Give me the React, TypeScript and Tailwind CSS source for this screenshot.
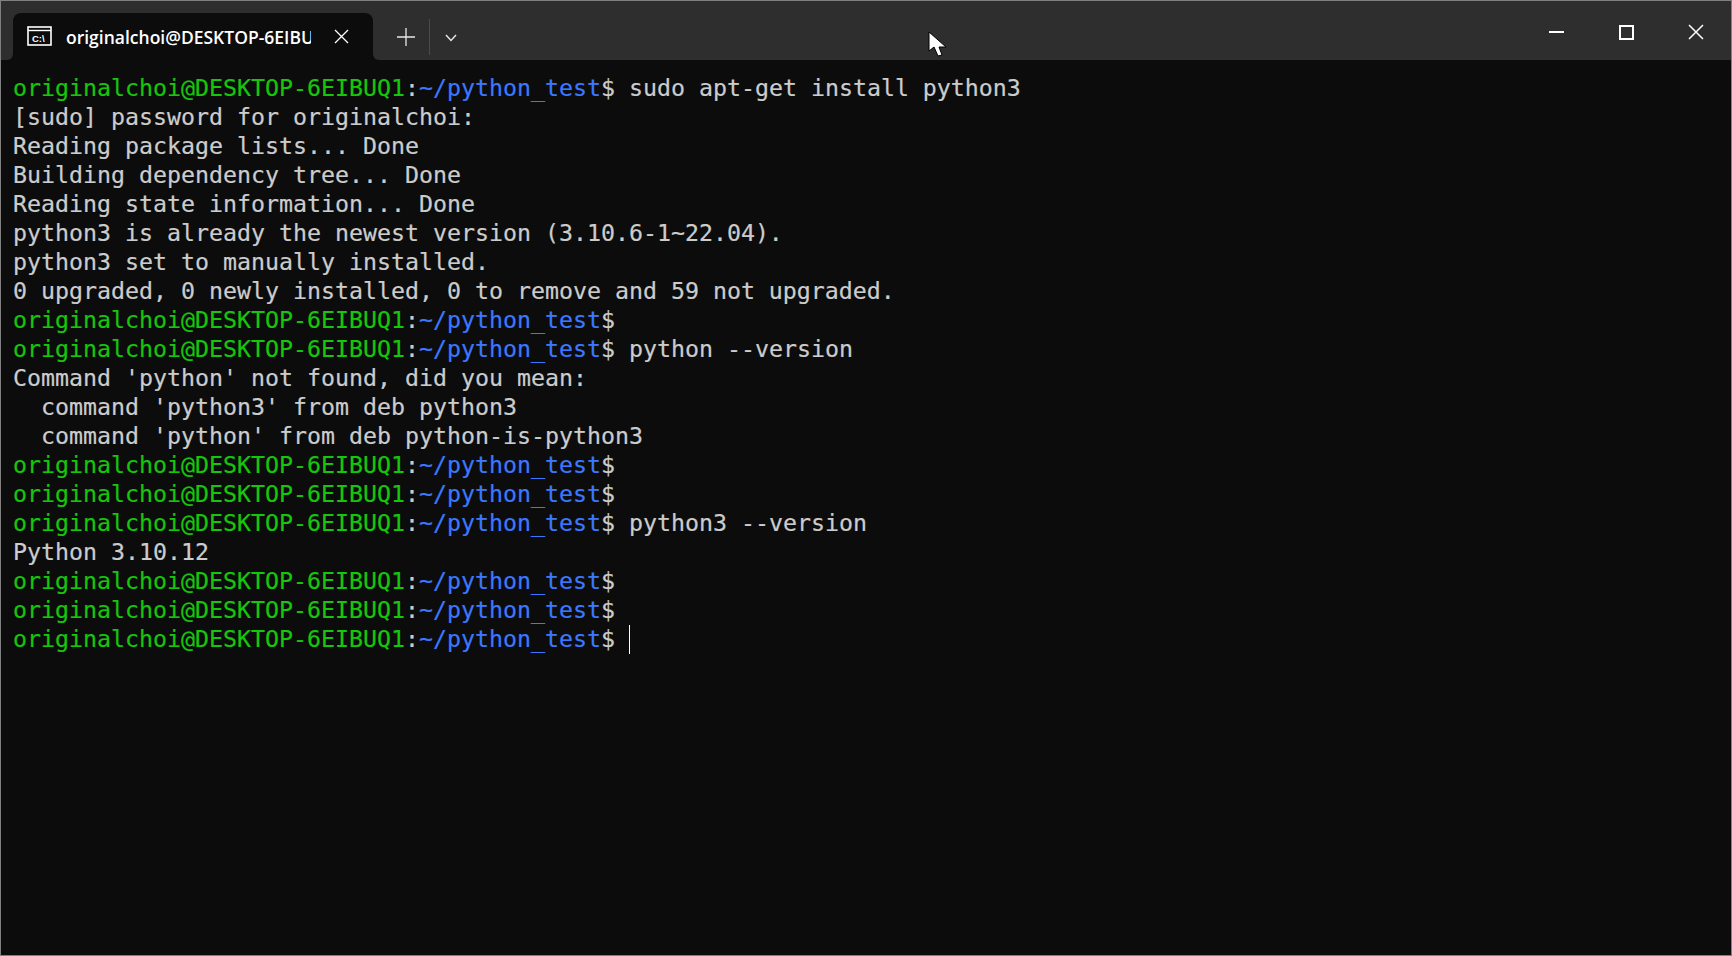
import React from 'react';

const Prompt = ({ cmd, cursor }: { cmd?: string; cursor?: boolean }) => (
  <div className="h-[29px] whitespace-pre flex items-center">
    <span className="text-[#16c60c]">originalchoi@DESKTOP-6EIBUQ1</span>
    <span>:</span>
    <span className="text-[#3b78ff]">~/python_test</span>
    <span>$</span>
    {cmd ? <span> {cmd}</span> : null}
    {cursor ? <span className="ml-[14px] mt-[2px] w-px h-[29px] bg-white" /> : null}
  </div>
);

const Out = ({ children }: { children: string }) => (
  <div className="h-[29px] whitespace-pre flex items-center">{children}</div>
);

export default function App() {
  return (
    <div className="w-[1732px] h-[956px] overflow-hidden bg-[#0c0c0c] border border-[#808080] flex flex-col relative">
      {/* title bar */}
      <div className="h-[59px] bg-[#2e2e2e] flex items-end shrink-0 pl-[6px]">
        <div className="w-[6px] h-[6px] bg-[#0c0c0c]">
          <div className="w-full h-full bg-[#2e2e2e] rounded-br-[6px]" />
        </div>
        <div className="w-[360px] h-[47px] bg-[#0c0c0c] rounded-t-[8px] flex items-center pl-[14px] text-white font-['Open_Sans',sans-serif] font-semibold text-[17.5px]">
          <svg width="25" height="20" viewBox="0 0 25 20" className="shrink-0 -mt-[1px]" fill="none" stroke="#fff">
            <rect x="1" y="1" width="23" height="18" strokeWidth="1.6" />
            <line x1="1" y1="4.5" x2="24" y2="4.5" strokeWidth="1.4" />
            <text x="5" y="15.5" fontSize="9.5" fill="#fff" stroke="none" fontFamily="Liberation Sans, sans-serif">C:\</text>
          </svg>
          <div className="ml-[14px] mt-[2px] w-[245px] overflow-hidden whitespace-nowrap">originalchoi@DESKTOP-6EIBUQ1</div>
          <svg width="15" height="15" viewBox="0 0 15 15" className="ml-[23px] shrink-0" stroke="#fff" strokeWidth="1.3">
            <path d="M1 1 L14 14 M14 1 L1 14" />
          </svg>
        </div>
        <div className="w-[6px] h-[6px] bg-[#0c0c0c]">
          <div className="w-full h-full bg-[#2e2e2e] rounded-bl-[6px]" />
        </div>
        <div className="h-[47px] flex items-center">
          <svg width="18" height="18" viewBox="0 0 18 18" className="ml-[18px]" stroke="#e8e8e8" strokeWidth="1.3">
            <path d="M9 0 V18 M0 9 H18" />
          </svg>
          <div className="ml-[14px] w-px h-[36px] bg-[#4a4a4a]" />
          <svg width="12" height="8" viewBox="0 0 12 8" className="ml-[15px] mt-[2px]" fill="none" stroke="#e8e8e8" strokeWidth="1.4">
            <path d="M1 1 L6 6.5 L11 1" />
          </svg>
        </div>
        <div className="ml-auto self-start h-full flex">
          <div className="w-[70px] flex items-center justify-center pt-[3px]">
            <div className="w-[15px] h-[2px] bg-white" />
          </div>
          <div className="w-[70px] flex items-center justify-center pt-[3px]">
            <div className="w-[15px] h-[15px] border-2 border-white" />
          </div>
          <div className="w-[70px] flex items-center justify-center pt-[3px]">
            <svg width="16" height="16" viewBox="0 0 16 16" stroke="#fff" strokeWidth="1.5">
              <path d="M1 1 L15 15 M15 1 L1 15" />
            </svg>
          </div>
        </div>
      </div>

      {/* terminal output */}
      <div className="pt-[13px] pl-[12px] text-[#cccccc] font-['DejaVu_Sans_Mono',monospace] text-[23.25px] leading-[29px] [-webkit-text-stroke:0.2px]">
        <Prompt cmd="sudo apt-get install python3" />
        <Out>[sudo] password for originalchoi:</Out>
        <Out>Reading package lists... Done</Out>
        <Out>Building dependency tree... Done</Out>
        <Out>Reading state information... Done</Out>
        <Out>python3 is already the newest version (3.10.6-1~22.04).</Out>
        <Out>python3 set to manually installed.</Out>
        <Out>0 upgraded, 0 newly installed, 0 to remove and 59 not upgraded.</Out>
        <Prompt />
        <Prompt cmd="python --version" />
        <Out>Command 'python' not found, did you mean:</Out>
        <Out>  command 'python3' from deb python3</Out>
        <Out>  command 'python' from deb python-is-python3</Out>
        <Prompt />
        <Prompt />
        <Prompt cmd="python3 --version" />
        <Out>Python 3.10.12</Out>
        <Prompt />
        <Prompt />
        <Prompt cursor />
      </div>

      {/* mouse pointer */}
      <svg width="20" height="28" viewBox="0 0 20 28" className="absolute left-[927px] top-[30px]">
        <path d="M1 1 L1 20 L6 16 L10 25 L14 24 L11 16 L18 16 Z" fill="#fff" stroke="#000" strokeWidth="1" />
      </svg>
    </div>
  );
}
